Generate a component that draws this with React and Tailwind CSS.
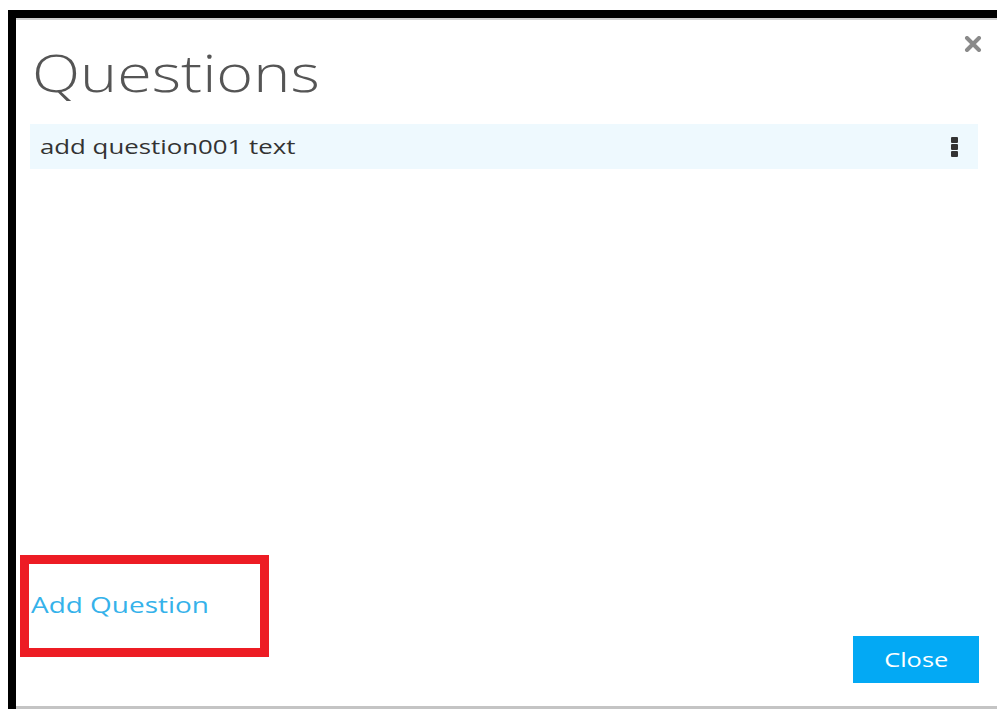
import React from "react";

// Modal listing the questions of a form, with an add link and a close button
export default function App() {
    const questions = [{ id: 1, text: "add question001 text" }];

    return (
        <div className="relative w-[997px] h-[711px] bg-white overflow-hidden" style={{ fontFamily: "'Open Sans', 'Liberation Sans', sans-serif" }}>
            <div className="mt-[10px] ml-[8px] h-[699px] border-t-[8px] border-l-[8px] border-black">
                <div className="flex flex-col h-full border-t-2 border-[#cfcfcf] border-b-[3px] border-b-[#c4c4c4]">
                    {/* header */}
                    <div className="flex items-start justify-between pl-[16px] pr-[15px]">
                        <h1 className="mt-[20px] text-[52px] leading-[64px] font-light text-[#555]">
                            <span className="inline-block origin-left scale-x-[1.21]">Questions</span>
                        </h1>
                        <button className="mt-[16px] text-[#8a8a8a]" aria-label="close">
                            <svg width="18" height="16" viewBox="0 0 18 16">
                                <path d="M3 2 L15 14 M15 2 L3 14" stroke="currentColor" strokeWidth="4" strokeLinecap="round" />
                            </svg>
                        </button>
                    </div>

                    {/* question rows */}
                    <div className="mt-[20px] pl-[14px] pr-[19px]">
                        {questions.map((q) => (
                            <div key={q.id} className="flex items-center justify-between h-[45px] bg-[#eef9fe] pl-[10px] pr-[20px]">
                                <span className="inline-block origin-left scale-x-[1.29] text-[20px] text-[#333]">{q.text}</span>
                                <div className="flex flex-col gap-[1px]">
                                    <span className="block w-[7px] h-[6px] bg-[#333] rounded-[1px]" />
                                    <span className="block w-[7px] h-[6px] bg-[#333] rounded-[1px]" />
                                    <span className="block w-[7px] h-[6px] bg-[#333] rounded-[1px]" />
                                </div>
                            </div>
                        ))}
                    </div>

                    <div className="flex-grow" />

                    {/* footer */}
                    <div className="flex items-end justify-between pl-[15px] pr-[18px] pb-[23px]">
                        <a href="#" className="mb-[65px] text-[22px] text-[#35b2ea] leading-[28px]">
                            <span className="inline-block origin-left scale-x-[1.27]">Add Question</span>
                        </a>
                        <button className="w-[126px] h-[47px] bg-[#03a9f4] text-white text-[20px]">
                            <span className="inline-block scale-x-[1.27]">Close</span>
                        </button>
                    </div>
                </div>
            </div>

            {/* red highlight frame */}
            <div className="absolute left-[20px] top-[555px] w-[249px] h-[102px] border-[9px] border-[#ed1c24]" />
        </div>
    );
}
